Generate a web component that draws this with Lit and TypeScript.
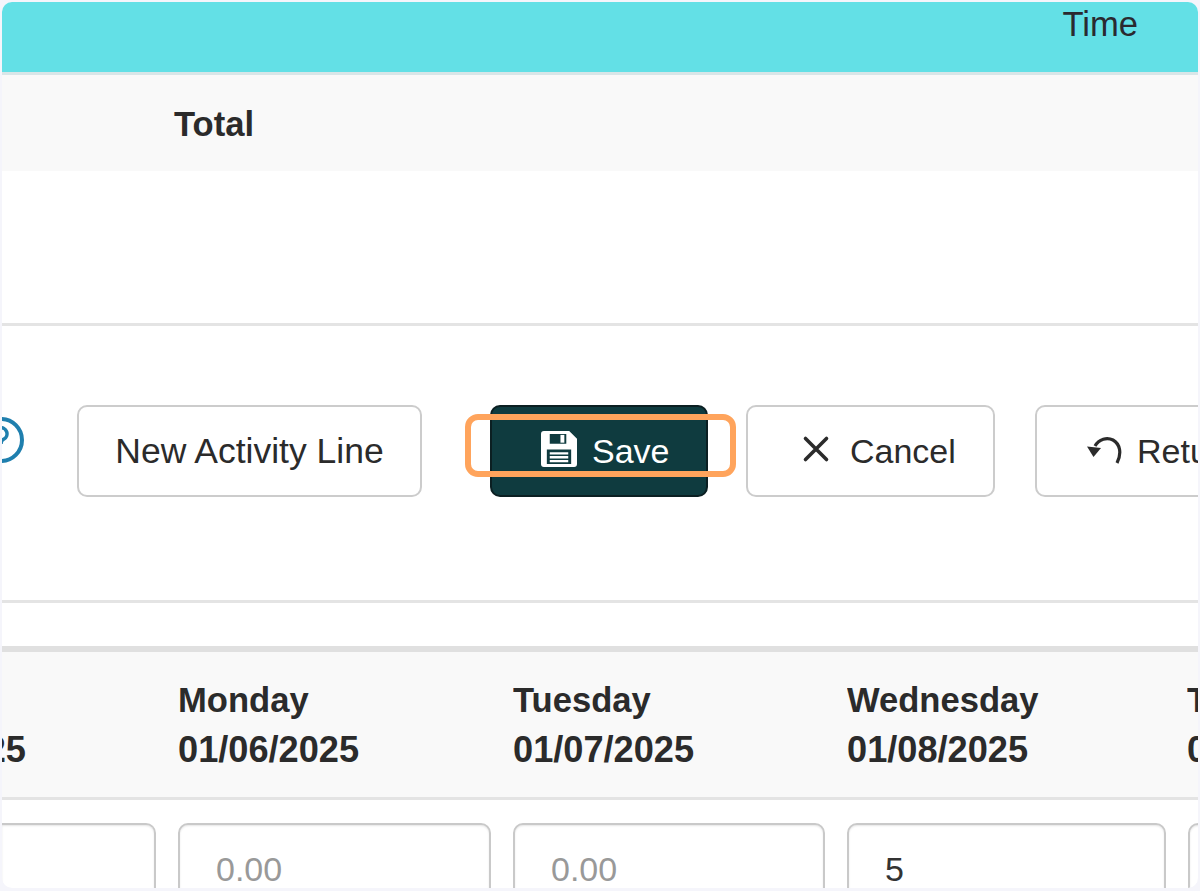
import { LitElement, html, css } from "lit";
import { customElement } from "lit/decorators.js";

@customElement("app-root")
export class AppRoot extends LitElement {
  static styles = css`
    :host {
      display: block;
      width: 1200px;
      height: 891px;
      background: #f5f5fb;
      font-family: "Liberation Sans", Arial, sans-serif;
      color: #2b2b2b;
    }
    * { box-sizing: border-box; }
    .frame {
      position: relative;
      margin: 0 2px;
      top: 2px;
      width: 1196px;
      height: 886px;
      background: #fff;
      border-radius: 10px;
      overflow: hidden;
    }
    .teal {
      height: 73px;
      background: #63e0e6;
      border-bottom: 3px solid #d9e6e8;
      display: flex;
      justify-content: flex-end;
      padding-right: 60px;
      font-size: 34.6px;
      line-height: 44px;
      color: #2a2a30;
    }
    .total {
      height: 96px;
      background: #f9f9f9;
      display: flex;
      align-items: center;
      padding: 2px 0 0 172px;
      font-size: 34.6px;
      font-weight: 700;
    }
    .blank {
      height: 155px;
      border-bottom: 3px solid #e4e4e4;
    }
    .toolbar {
      height: 277px;
      border-bottom: 3px solid #e4e4e4;
      position: relative;
      display: flex;
      align-items: flex-start;
      padding: 79px 0 0 75px;
      white-space: nowrap;
    }
    .help {
      position: absolute;
      left: -24px;
      top: 91px;
      width: 46px;
      height: 46px;
    }
    .btn {
      height: 92px;
      border: 2px solid #cccccc;
      border-radius: 10px;
      background: #fff;
      font-size: 34px;
      display: flex;
      align-items: center;
      color: #2b2b2b;
      flex: none;
    }
    .new { width: 345px; justify-content: center; margin-right: 68px; font-size: 35.5px; }
    .save {
      width: 218px;
      background: #0f3b3f;
      border-color: #0b1f22;
      color: #fff;
      padding-left: 49px;
      gap: 15px;
      margin-right: 38px;
    }
    .cancel { width: 249px; padding-left: 54px; gap: 20px; margin-right: 40px; }
    .ret { width: 300px; padding-left: 50px; gap: 14px; }
    .highlight {
      position: absolute;
      left: 463px;
      top: 88px;
      width: 271px;
      height: 63px;
      border: 6px solid #ffa45c;
      border-radius: 13px;
    }
    .table {
      margin-top: 43px;
    }
    .head {
      height: 154px;
      background: #f9f9f9;
      border-top: 6px solid #e0e0e0;
      border-bottom: 3px solid #e4e4e4;
      display: grid;
      grid-template-columns: 176px 335px 334px 340px 100px;
      padding-top: 24px;
      font-size: 34.6px;
      font-weight: 700;
      line-height: 49px;
      white-space: nowrap;
    }
    .date { font-size: 36.2px; }
    .cell { overflow: hidden; }
    .clipL { direction: rtl; padding-right: 152px; }
    .inputs {
      display: grid;
      grid-template-columns: 154px 313px 312px 319px 40px;
      column-gap: 22px;
      padding-top: 23px;
    }
    .input {
      height: 90px;
      border: 2px solid #c9c9c9;
      border-radius: 10px;
      box-shadow: inset 0 1px 2px rgba(0,0,0,.1);
      padding: 24px 0 0 36px;
      font-size: 34px;
      line-height: 40px;
      color: #999;
    }
    .input.first { border-left: 0; border-radius: 0 10px 10px 0; }
    .input.val { color: #333; }
    .svg { flex: none; display: block; }
    .up { margin-top: -4px; }
  `;

  render() {
    const days: [string, string][] = [
      ["Monday", "01/06/2025"],
      ["Tuesday", "01/07/2025"],
      ["Wednesday", "01/08/2025"],
      ["T", "0"],
    ];
    return html`
      <div class="frame">
        <div class="teal">Time</div>
        <div class="total">Total</div>
        <div class="blank"></div>
        <div class="toolbar">
          <svg class="help" viewBox="0 0 46 46" fill="none" stroke="#1f7fae" stroke-width="4">
            <circle cx="23" cy="23" r="21"></circle>
            <path d="M17 17a6 6 0 1 1 9 5c-2 1-3 2-3 5" stroke-width="3.5"></path>
          </svg>
          <div class="btn new">New Activity Line</div>
          <div class="btn save">
            <svg class="svg up" width="36" height="36" viewBox="0 0 37 37">
              <path fill="#fff" fill-rule="evenodd" d="M3 0h26l8 8v26a3 3 0 0 1-3 3H3a3 3 0 0 1-3-3V3a3 3 0 0 1 3-3Zm6 3v10h17V3ZM6 19v15h25V19Z"></path>
              <rect x="20" y="4" width="4" height="8" fill="#fff"></rect>
              <path stroke="#fff" stroke-width="2.4" d="M9 23h19M9 27h19M9 31h19"></path>
            </svg>
            <span>Save</span>
          </div>
          <div class="btn cancel">
            <svg class="svg up" width="28" height="28" viewBox="0 0 28 28">
              <path d="M3.500 3.500l21 21M24.500 3.500l-21 21" stroke="#2b2b2b" stroke-width="3.600" stroke-linecap="round"></path>
            </svg>
            <span>Cancel</span>
          </div>
          <div class="btn ret">
            <svg class="svg" width="36" height="30" viewBox="0 0 36 30">
              <path d="M8 10C12 3 20 1 26 4c7 4 9 13 4 23" fill="none" stroke="#2b2b2b" stroke-width="3.200"></path>
              <path d="M0 10.500l14 1.500-7.500 9z" fill="#2b2b2b"></path>
            </svg>
            <span>Return</span>
          </div>
          <div class="highlight"></div>
        </div>
        <div class="table">
          <div class="head">
            <div class="cell clipL"><br /><bdi class="date">01/05/2025</bdi></div>
            ${days.map(([d, date]) => html`<div class="cell">${d}<br /><span class="date">${date}</span></div>`)}
          </div>
          <div class="inputs">
            <div class="input first"></div>
            <div class="input">0.00</div>
            <div class="input">0.00</div>
            <div class="input val">5</div>
            <div class="input"></div>
          </div>
        </div>
      </div>
    `;
  }
}
